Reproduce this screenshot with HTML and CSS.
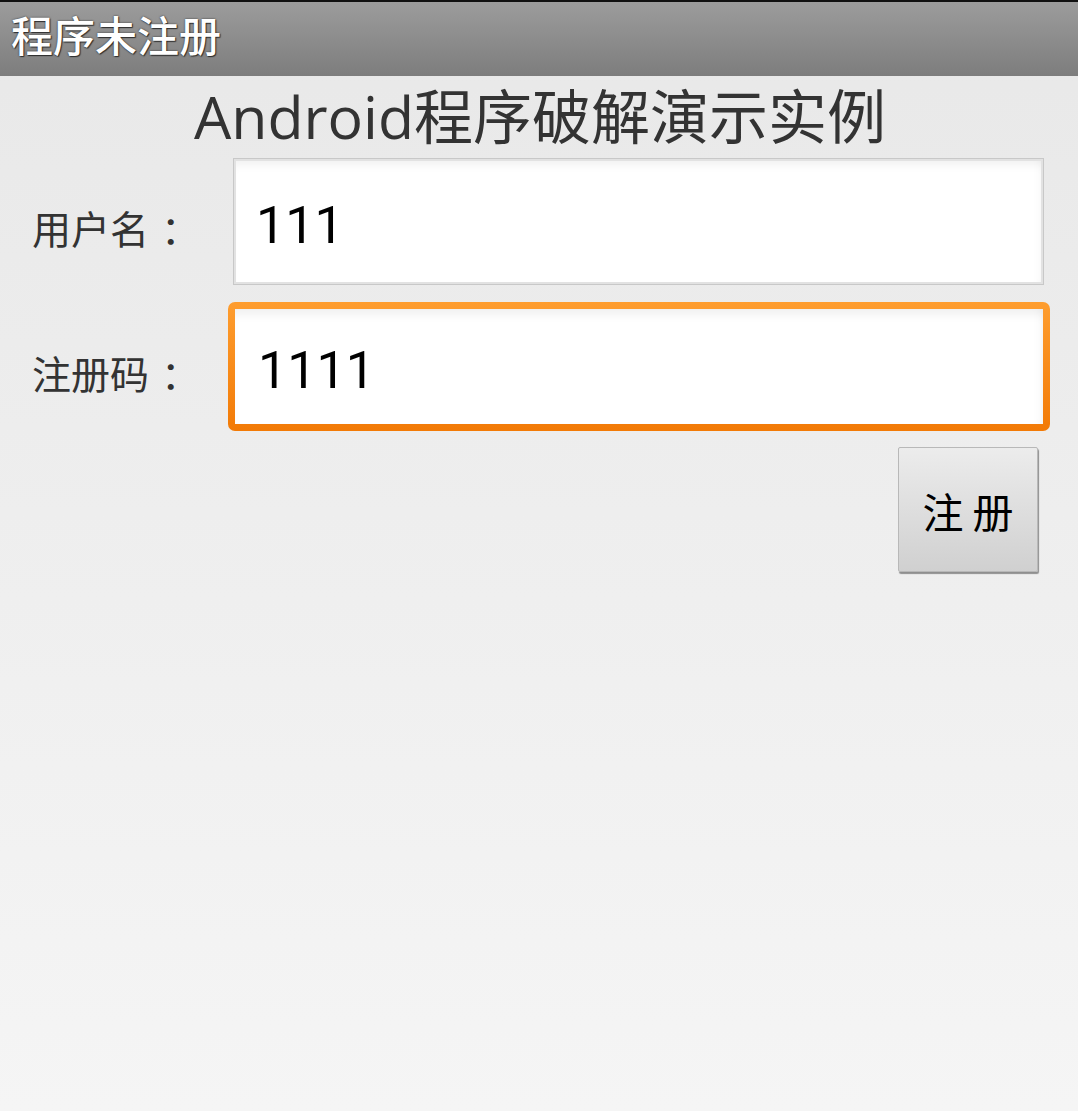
FILE: index.html
```html
<!DOCTYPE html>
<html lang="zh-CN">
<head>
<meta charset="utf-8">
<title>程序未注册</title>
<link rel="stylesheet" href="styles.css">
</head>
<body>
<div class="app">
  <header class="titlebar"><span class="title-text">程序未注册</span></header>
  <main class="content">
    <h1 class="heading">Android程序破解演示实例</h1>
    <div class="row">
      <label class="label">用户名<span class="colon">：</span></label>
      <div class="field field-plain">
        <div class="input">111</div>
      </div>
    </div>
    <div class="row row-focus">
      <label class="label">注册码<span class="colon">：</span></label>
      <div class="field">
        <div class="input input-focus">1111</div>
      </div>
    </div>
    <div class="actions">
      <button class="btn">注 册</button>
    </div>
  </main>
</div>
</body>
</html>
```

FILE: styles.css
```css
html, body {
  margin: 0;
  padding: 0;
  height: 100%;
}
body {
  font-family: "Noto Sans CJK SC", "Open Sans", sans-serif;
  background: linear-gradient(#e8e8e8, #f5f5f5);
  width: 1078px;
  height: 1111px;
  overflow: hidden;
}
.app {
  display: flex;
  flex-direction: column;
  height: 100%;
}
.titlebar {
  height: 74px;
  border-top: 2px solid #111;
  background: linear-gradient(#9c9c9c, #7d7d7d);
  display: flex;
  align-items: center;
  padding-left: 11px;
}
.title-text {
  color: #fff;
  font-size: 42px;
  font-weight: 500;
  text-shadow: 0 0 2px rgba(0,0,0,0.7), 1px 1px 1px rgba(0,0,0,0.6);
  line-height: 1;
  margin-top: -10px;
}
.content {
  display: flex;
  flex-direction: column;
  padding: 0 28px 0 32px;
}
.heading {
  margin: 0;
  text-align: center;
  font-family: "Open Sans", "Noto Sans CJK SC", sans-serif;
  font-weight: 400;
  font-size: 59px;
  color: #333;
  height: 83px;
  line-height: 83px;
  margin-left: -2px;
  margin-top: -1px;
}
.row {
  display: flex;
  align-items: center;
}
.label {
  width: 196px;
  font-size: 39px;
  color: #333;
  padding-top: 10px;
  white-space: nowrap;
}
.colon {
  margin-left: 12px;
}
.field {
  flex: 1;
  display: flex;
}
.field-plain {
  padding: 0 6px 0 5px;
}
.input {
  flex: 1;
  box-sizing: border-box;
  height: 127px;
  background: #fff;
  border: 1px solid #c8c8c8;
  box-shadow: inset 0 0 0 2px #e2e2e2, inset 0 10px 10px -4px rgba(0,0,0,0.06), inset -8px 0 10px -6px rgba(0,0,0,0.05);
  font-family: "Roboto", "Liberation Sans", sans-serif;
  font-size: 52px;
  color: #000;
  display: flex;
  align-items: center;
  padding-left: 22px;
  padding-top: 8px;
}
.row-focus {
  margin-top: 17px;
}
.input-focus {
  height: 129px;
  border: 7px solid transparent;
  border-radius: 7px;
  background:
    linear-gradient(#fff, #fff) padding-box,
    linear-gradient(#fe9d2f, #f27a06) border-box;
  padding-left: 23px;
  box-shadow: inset 0 10px 10px -4px rgba(0,0,0,0.06), inset -8px 0 10px -6px rgba(0,0,0,0.05);
}
.actions {
  display: flex;
  justify-content: flex-end;
  padding-top: 16px;
  padding-right: 12px;
}
.btn {
  width: 140px;
  height: 125px;
  box-sizing: border-box;
  border: 1px solid #b8b8b8;
  border-radius: 2px;
  background: linear-gradient(#ececec, #d0d0d0);
  box-shadow: 1px 2px 1px rgba(0,0,0,0.4);
  font-family: "Noto Sans CJK SC", sans-serif;
  font-size: 41px;
  color: #000;
  padding: 0;
}
```
